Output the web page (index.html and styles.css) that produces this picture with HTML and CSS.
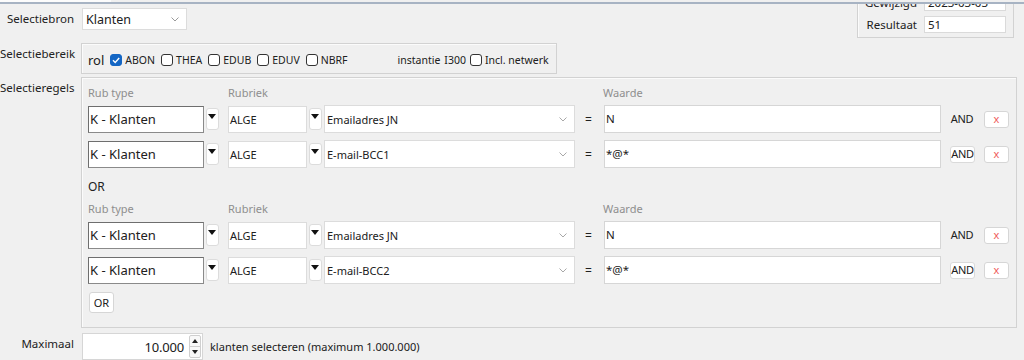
FILE: index.html
```html
<!DOCTYPE html>
<html lang="nl">
<head>
<meta charset="utf-8">
<title>Selectie</title>
<link rel="stylesheet" href="styles.css">
</head>
<body>
<div class="topline"><span class="tab"></span></div>
<div class="page">
  <div class="head">
    <div class="head-left">
      <div class="row row-bron">
        <label class="lbl">Selectiebron</label>
        <div class="select sel-bron"><span>Klanten</span><svg class="chev" width="8" height="5" viewBox="0 0 8 5"><polyline points="0.5,0.5 4,4 7.5,0.5" fill="none" stroke="#9a9a9a" stroke-width="1"/></svg></div>
      </div>
      <div class="row row-bereik">
        <label class="lbl">Selectiebereik</label>
        <div class="bereik">
          <span class="rol">rol</span>
          <span class="chk"><span class="box on"><svg width="12" height="12" viewBox="0 0 12 12"><polyline points="3,6.2 5.2,8.4 9.2,4" fill="none" stroke="#fff" stroke-width="1.4"/></svg></span>ABON</span>
          <span class="chk"><span class="box"></span>THEA</span>
          <span class="chk"><span class="box"></span>EDUB</span>
          <span class="chk"><span class="box"></span>EDUV</span>
          <span class="chk"><span class="box"></span>NBRF</span>
          <span class="inst">instantie</span>
          <span class="inst-val">I300</span>
          <span class="chk"><span class="box"></span>Incl. netwerk</span>
        </div>
      </div>
    </div>
    <div class="info">
      <div class="info-row"><span class="info-lbl">Gewijzigd</span><span class="info-field">2023-03-03</span></div>
      <div class="info-row"><span class="info-lbl">Resultaat</span><span class="info-field">51</span></div>
    </div>
  </div>

  <div class="row row-regels">
    <label class="lbl">Selectieregels</label>
    <div class="regels">
      <div class="ghead"><span class="gh-type">Rub type</span><span class="gh-rub">Rubriek</span><span>Waarde</span></div>
      <div class="rule">
        <span class="rtype">K - Klanten</span>
        <span class="tri"><svg width="8" height="5" viewBox="0 0 8 5"><polygon points="0,0 8,0 4,5" fill="#111"/></svg></span>
        <span class="rcode">ALGE</span>
        <span class="tri"><svg width="8" height="5" viewBox="0 0 8 5"><polygon points="0,0 8,0 4,5" fill="#111"/></svg></span>
        <span class="rsel"><span>Emailadres JN</span><svg class="chev" width="8" height="5" viewBox="0 0 8 5"><polyline points="0.5,0.5 4,4 7.5,0.5" fill="none" stroke="#a8a8a8" stroke-width="1"/></svg></span>
        <span class="eq">=</span>
        <span class="val">N</span>
        <span class="and">AND</span>
        <span class="del">x</span>
      </div>
      <div class="rule">
        <span class="rtype">K - Klanten</span>
        <span class="tri"><svg width="8" height="5" viewBox="0 0 8 5"><polygon points="0,0 8,0 4,5" fill="#111"/></svg></span>
        <span class="rcode">ALGE</span>
        <span class="tri"><svg width="8" height="5" viewBox="0 0 8 5"><polygon points="0,0 8,0 4,5" fill="#111"/></svg></span>
        <span class="rsel"><span>E-mail-BCC1</span><svg class="chev" width="8" height="5" viewBox="0 0 8 5"><polyline points="0.5,0.5 4,4 7.5,0.5" fill="none" stroke="#a8a8a8" stroke-width="1"/></svg></span>
        <span class="eq">=</span>
        <span class="val">*@*</span>
        <span class="and btn-and">AND</span>
        <span class="del">x</span>
      </div>
      <div class="or-lbl">OR</div>
      <div class="ghead ghead2"><span class="gh-type">Rub type</span><span class="gh-rub">Rubriek</span><span>Waarde</span></div>
      <div class="rule">
        <span class="rtype">K - Klanten</span>
        <span class="tri"><svg width="8" height="5" viewBox="0 0 8 5"><polygon points="0,0 8,0 4,5" fill="#111"/></svg></span>
        <span class="rcode">ALGE</span>
        <span class="tri"><svg width="8" height="5" viewBox="0 0 8 5"><polygon points="0,0 8,0 4,5" fill="#111"/></svg></span>
        <span class="rsel"><span>Emailadres JN</span><svg class="chev" width="8" height="5" viewBox="0 0 8 5"><polyline points="0.5,0.5 4,4 7.5,0.5" fill="none" stroke="#a8a8a8" stroke-width="1"/></svg></span>
        <span class="eq">=</span>
        <span class="val">N</span>
        <span class="and">AND</span>
        <span class="del">x</span>
      </div>
      <div class="rule">
        <span class="rtype">K - Klanten</span>
        <span class="tri"><svg width="8" height="5" viewBox="0 0 8 5"><polygon points="0,0 8,0 4,5" fill="#111"/></svg></span>
        <span class="rcode">ALGE</span>
        <span class="tri"><svg width="8" height="5" viewBox="0 0 8 5"><polygon points="0,0 8,0 4,5" fill="#111"/></svg></span>
        <span class="rsel"><span>E-mail-BCC2</span><svg class="chev" width="8" height="5" viewBox="0 0 8 5"><polyline points="0.5,0.5 4,4 7.5,0.5" fill="none" stroke="#a8a8a8" stroke-width="1"/></svg></span>
        <span class="eq">=</span>
        <span class="val">*@*</span>
        <span class="and btn-and">AND</span>
        <span class="del">x</span>
      </div>
      <div class="or-btn">OR</div>
    </div>
  </div>

  <div class="row row-max">
    <label class="lbl">Maximaal</label>
    <div class="max-line">
      <div class="num">
        <span class="num-val">10.000</span>
        <span class="spin">
          <span class="spin-half"><svg width="6" height="4" viewBox="0 0 6 4"><polygon points="0,4 6,4 3,0" fill="#222"/></svg></span>
          <span class="spin-half spin-down"><svg width="6" height="4" viewBox="0 0 6 4"><polygon points="0,0 6,0 3,4" fill="#222"/></svg></span>
        </span>
      </div>
      <span class="max-txt">klanten selecteren (maximum 1.000.000)</span>
    </div>
  </div>
</div>
</body>
</html>
```
FILE: styles.css
```css
* { box-sizing: border-box; }
html, body { margin: 0; padding: 0; }
body {
  background: #f0f0f0;
  font-family: "Noto Sans", "Open Sans", sans-serif;
  font-size: 11.5px;
  color: #202020;
  overflow: hidden;
  height: 360px;
}

.topline {
  height: 4px;
  border-bottom: 2px solid #a7b3c3;
  display: flex;
}
.topline .tab { width: 111px; height: 2px; background: #fcfcfc; }

.page {
  height: 356px;
  overflow: hidden;
}

.head {
  display: flex;
  justify-content: space-between;
  align-items: flex-start;
}
.head-left { padding-top: 4px; }

.row {
  display: grid;
  grid-template-columns: 76px 1fr;
  column-gap: 5px;
}
.lbl {
  text-align: right;
  padding-right: 2px;
  line-height: 16px;
  white-space: nowrap;
  color: #222;
}

.row-bron { align-items: center; }
.sel-bron {
  margin-left: 1px;
  width: 105px;
  height: 22px;
  background: #fff;
  border: 1px solid #dcdcdc;
  display: flex;
  align-items: center;
  justify-content: space-between;
  padding: 0 7px 0 3px;
  font-size: 12.5px;
}

.row-bereik { margin-top: 13px; grid-template-columns: 76px auto; justify-content: start; }
.row-bereik .lbl { padding-top: 3px; }
.bereik {
  width: 476px;
  height: 31px;
  border: 1px solid #d2d2d2;
  box-shadow: inset 1px 1px 0 #fbfbfb;
  display: flex;
  align-items: center;
  padding: 2px 0 0 6px;
  font-size: 10.5px;
  overflow: hidden;
}
.rol { font-size: 13px; margin-right: 6px; }
.chk { display: inline-flex; align-items: center; margin-right: 6px; white-space: nowrap; flex-shrink: 0; }
.box {
  width: 12px;
  height: 12px;
  border: 1px solid #333;
  border-radius: 3px;
  background: #fff;
  margin-right: 3px;
  display: inline-flex;
  flex-shrink: 0;
}
.box.on { background: #1466c4; border-color: #1466c4; }
.box.on svg { margin: -1px; }
.inst { margin-left: 44px; margin-right: 4px; white-space: nowrap; }
.inst-val { margin-right: 4px; }

.info {
  margin-top: -15px;
  margin-right: 10px;
  width: 157px;
  border: 1px solid #d2d2d2;
  box-shadow: inset 1px 1px 0 #fbfbfb;
  padding: 4px 7px 4px 0;
  display: flex;
  flex-direction: column;
  gap: 5px;
}
.info-row { display: flex; align-items: center; }
.info-lbl { width: 59px; text-align: right; margin-right: 7px; }
.info-field {
  width: 82px;
  height: 17px;
  background: #fff;
  border: 1px solid #dadada;
  padding-left: 3px;
  line-height: 15px;
}

.row-regels { margin-top: 3px; padding-right: 7px; }
.row-regels .lbl { padding-top: 3px; }
.regels {
  height: 251px;
  border: 1px solid #d2d2d2;
  box-shadow: inset 1px 1px 0 #fbfbfb;
  padding: 8px 6px 0 6px;
  font-size: 11px;
}
.ghead {
  display: flex;
  line-height: 14px;
  color: #8e8e8e;
  margin-bottom: 5px;
}
.gh-type { width: 140px; }
.gh-rub { width: 375px; }
.ghead2 { margin-top: 7px; }

.rule { display: flex; align-items: center; height: 28px; }
.rule + .rule { margin-top: 7px; }
.rtype {
  width: 116px;
  height: 27px;
  background: #fff;
  border: 1px solid #8a8a8a;
  border-top-color: #6e6e6e;
  border-left-color: #6e6e6e;
  font-size: 13px;
  line-height: 25px;
  padding-left: 1px;
}
.tri {
  width: 13px;
  height: 22px;
  margin-left: 2px;
  background: #fff;
  border: 1px solid #dcdcdc;
  border-radius: 3px;
  display: flex;
  justify-content: center;
  padding-top: 5px;
}
.tri svg { margin-left: -2px; }
.rcode {
  width: 79px;
  height: 27px;
  margin-left: 9px;
  background: #fff;
  border: 1px solid #dcdcdc;
  line-height: 25px;
  padding-left: 1px;
}
.rsel {
  width: 251px;
  height: 28px;
  margin-left: 2px;
  background: #fff;
  border: 1px solid #dcdcdc;
  display: flex;
  align-items: center;
  justify-content: space-between;
  padding: 0 7px 0 2px;
}
.eq { width: 27px; margin-right: 2px; text-align: center; font-size: 12px; }
.val {
  width: 337px;
  height: 28px;
  background: #fff;
  border: 1px solid #d6d6d6;
  line-height: 26px;
  padding-left: 1px;
  font-size: 11.5px;
}
.and {
  margin-left: 8px;
  width: 26px;
  height: 17px;
  line-height: 16px;
  text-align: center;
  letter-spacing: -0.3px;
}
.btn-and {
  background: #fff;
  border: 1px solid #dadada;
  border-radius: 3px;
  margin-left: 9px;
  width: 25px;
  line-height: 14px;
}
.del {
  margin-left: 9px;
  width: 25px;
  height: 17px;
  background: #fff;
  border: 1px solid #d6d6d6;
  border-radius: 3px;
  color: #ef5b5b;
  text-align: center;
  line-height: 14px;
  font-size: 11px;
}

.or-lbl {
  margin-top: 10px;
  font-size: 12px;
  line-height: 17px;
  color: #222;
}
.or-btn {
  margin-top: 8px;
  margin-left: 1px;
  width: 25px;
  height: 21px;
  background: #fff;
  border: 1px solid #d6d6d6;
  border-radius: 3px;
  text-align: center;
  line-height: 19px;
}

.row-max { margin-top: 5px; }
.row-max .lbl { padding-top: 3px; }
.max-line { display: flex; align-items: center; }
.num {
  margin-left: 1px;
  width: 121px;
  height: 27px;
  background: #fff;
  border: 1px solid #d6d6d6;
  display: flex;
  align-items: center;
  justify-content: flex-end;
  padding-right: 1px;
}
.num-val { font-size: 13px; margin-right: 5px; letter-spacing: -0.2px; }
.spin {
  width: 12px;
  height: 23px;
  border: 1px solid #cfcfcf;
  border-radius: 2px;
  background: #f8f8f8;
  display: flex;
  flex-direction: column;
}
.spin-half {
  flex: 1;
  display: flex;
  align-items: center;
  justify-content: center;
}
.spin-down { border-top: 1px solid #cfcfcf; }
.max-txt { margin-left: 7px; font-size: 11px; }
```
